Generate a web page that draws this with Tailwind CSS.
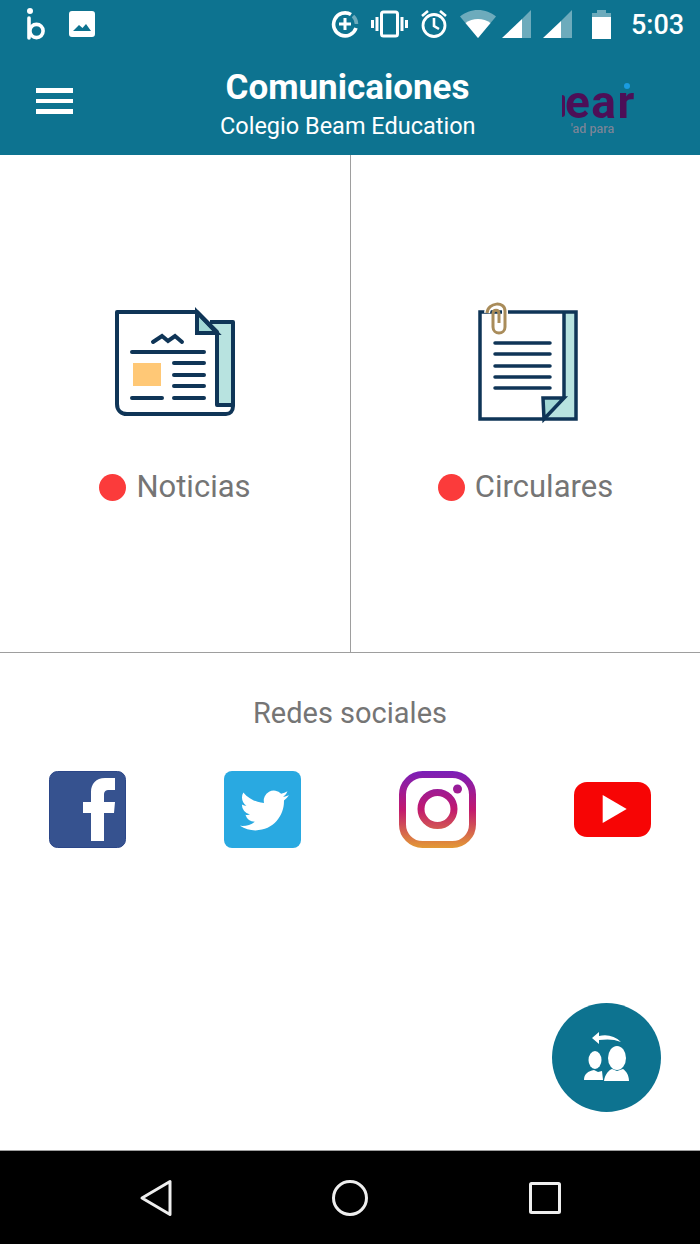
<!DOCTYPE html>
<html lang="es">
<head>
  <meta charset="UTF-8">
  <meta name="viewport" content="width=device-width, initial-scale=1.0">
  <title>Comunicaiones</title>
  <script src="https://cdn.jsdelivr.net/npm/@tailwindcss/browser@4"></script>
</head>
<body class="bg-white font-[Roboto,sans-serif]">
  <div class="relative flex flex-col w-[700px] h-[1244px] overflow-hidden">
    <!-- barra de estado -->
    <div class="flex items-center h-[48px] bg-[#0d7390] text-white">
      <svg class="ml-[27px]" width="20" height="36" viewBox="0 0 20 36" fill="none" stroke="white">
        <circle cx="3" cy="5" r="3" fill="white" stroke="none"/>
        <path d="M2 12V32" stroke-width="3.6" stroke-linecap="round"/>
        <circle cx="9.5" cy="25" r="6.6" stroke-width="3.6"/>
      </svg>
      <svg class="ml-[22px]" width="26" height="26" viewBox="0 0 26 26">
        <path fill="white" d="M3 0H23A3 3 0 0 1 26 3V23A3 3 0 0 1 23 26H3A3 3 0 0 1 0 23V3A3 3 0 0 1 3 0ZM4 20H22L17 13L13.5 17L10 14Z" fill-rule="evenodd"/>
      </svg>
      <svg class="ml-[236px]" width="28" height="28" viewBox="0 0 28 28" fill="none" stroke="white">
        <path d="M20 4.5A11.5 11.5 0 1 0 25 18" stroke-width="3.6"/>
        <path d="M22 6A11.5 11.5 0 0 1 25.5 14" stroke="white" stroke-opacity="0.4" stroke-width="3.6"/>
        <path d="M14 8V20M8 14H20" stroke-width="3"/>
      </svg>
      <svg class="ml-[12px]" width="37" height="28" viewBox="0 0 37 28" fill="none" stroke="white">
        <rect x="10.5" y="2" width="16" height="24" rx="2" stroke-width="3"/>
        <path d="M6 7V21M1.5 10V18M31 7V21M35.5 10V18" stroke-width="3"/>
      </svg>
      <svg class="ml-[12px]" width="28" height="30" viewBox="0 0 28 30" fill="none" stroke="white">
        <circle cx="14" cy="16.5" r="11" stroke-width="2.8"/>
        <path d="M14 9V17L19 20M2 7L8 2M26 7L20 2" stroke-width="2.6"/>
      </svg>
      <svg class="ml-[12px]" width="36" height="28" viewBox="0 0 36 28">
        <path fill="white" fill-opacity="0.4" d="M18 0C11 0 5 2.500 0 6.500L18 28L36 6.500C31 2.500 25 0 18 0Z"/>
        <path fill="white" d="M5.500 13L18 28L30.500 13C27 10.500 22.500 9 18 9C13.500 9 9 10.500 5.500 13Z"/>
      </svg>
      <svg class="ml-[6px]" width="29" height="28" viewBox="0 0 29 28">
        <path fill="white" fill-opacity="0.4" d="M29 0V28H20V9Z"/>
        <path fill="white" d="M20 9V28H0Z"/>
      </svg>
      <svg class="ml-[12px]" width="29" height="28" viewBox="0 0 29 28">
        <path fill="white" fill-opacity="0.4" d="M29 0V28H18V11Z"/>
        <path fill="white" d="M18 11V28H0Z"/>
      </svg>
      <svg class="ml-[20px]" width="19" height="29" viewBox="0 0 19 29">
        <path fill="white" fill-opacity="0.4" d="M5 0H14V3H19V8H0V3H5Z"/>
        <rect y="7" width="19" height="22" fill="white"/>
      </svg>
      <span class="ml-[20px] mt-[3px] text-[27px] leading-none font-medium whitespace-nowrap">5:03</span>
    </div>

    <!-- encabezado -->
    <header class="flex items-start h-[107px] bg-[#0d7390] text-white">
      <div class="flex flex-col gap-[6px] ml-[36px] mt-[40px] w-[37px]">
        <div class="h-[4.500px] bg-white"></div>
        <div class="h-[4.500px] bg-white"></div>
        <div class="h-[4.500px] bg-white"></div>
      </div>
      <div class="ml-[147px] mt-[21px] w-[255px] text-center whitespace-nowrap">
        <h1 class="text-[35px] leading-[38px] font-bold">Comunicaiones</h1>
        <p class="mt-[3px] text-[23.500px] leading-[32px]">Colegio Beam Education</p>
      </div>
      <div class="relative flex flex-col ml-[87px] mt-[35px] w-[73px] h-[52px] blur-[0.4px]">
        <span class="absolute top-[12px] left-0 w-[3px] h-[22px] rounded-r-full bg-[#4d0f57]"></span>
        <span class="absolute top-0 right-[5px] w-[6px] h-[6px] rounded-full bg-[#1a9ce0]"></span>
        <span class="mt-[4px] ml-[3px] text-[46px] leading-[30px] font-bold tracking-[1.500px] text-[#4d0f57]">ear</span>
        <span class="mt-[5px] ml-[9px] text-[12.500px] leading-[13px] font-medium text-[#7b8496] whitespace-nowrap">'ad para</span>
      </div>
    </header>

    <!-- comunicaciones -->
    <section class="flex h-[498px] border-b border-[#9e9e9e]">
      <div class="flex flex-col items-center w-[351px] pt-[150px] border-r border-[#9e9e9e]">
        <svg class="blur-[0.4px]" width="130" height="115" viewBox="0 0 130 115" fill="none" stroke="#0f3557" stroke-width="4">
          <path fill="#b8e3e0" stroke="none" d="M100 17H123V100H107V27Z"/>
          <path fill="#a2d8d5" d="M87 7V28H107Z"/>
          <path stroke-linejoin="round" d="M100 17H123V101C123 106 120 109 116 109H17C11 109 7 105 7 99V7H87L107 27V100H123"/>
          <path stroke-linecap="round" d="M43 37L52 31L58 36L65 31L72 37M22 47H94M64 58H94M64 70H94M64 81H94M64 93H94M22 93H52"/>
          <rect x="23" y="58" width="28" height="23" fill="#ffc876" stroke="none"/>
        </svg>
        <div class="flex items-center gap-[10px] mt-[49px] h-[36px]">
          <span class="w-[27px] h-[27px] rounded-full bg-[#fb3b3b]"></span>
          <span class="text-[31px] leading-[36px] text-[#757575]">Noticias</span>
        </div>
      </div>
      <div class="flex flex-col items-center w-[349px] pt-[150px]">
        <svg class="overflow-visible blur-[0.4px]" width="130" height="115" viewBox="0 0 130 115" fill="none" stroke="#0f3557" stroke-width="3.500">
          <path fill="#b8e3e0" stroke="none" d="M103 7H115V114H83L103 93Z"/>
          <path fill="#a2d8d5" d="M82 93H103L83 114Z"/>
          <path d="M19 7H115V114H19ZM103 7V93"/>
          <path stroke-linecap="round" d="M34 38H89M34 49H89M34 61H89M34 72H89M34 83H89"/>
          <path stroke="#ffffff" stroke-width="6" d="M26 8C27 -3 44 -4 44 6V22C44 30 32 30 32 22V9"/>
          <path stroke="#a98c5a" stroke-width="3" d="M26 8C27 -3 44 -4 44 6V22C44 30 32 30 32 22V9C32 4 38 4 38 9V18"/>
        </svg>
        <div class="flex items-center gap-[10px] mt-[49px] h-[36px]">
          <span class="w-[27px] h-[27px] rounded-full bg-[#fb3b3b]"></span>
          <span class="text-[31px] leading-[36px] text-[#757575]">Circulares</span>
        </div>
      </div>
    </section>

    <!-- redes sociales -->
    <section class="flex-1 bg-white">
      <h2 class="mt-[44px] text-center text-[29px] leading-[32px] font-normal text-[#757575]">Redes sociales</h2>
      <div class="grid grid-cols-4 mt-[42px] justify-items-center">
        <svg class="blur-[0.4px]" width="77" height="77" viewBox="0 0 77 77">
          <rect x="0.500" y="0.500" width="76" height="76" rx="8" fill="#36528f" stroke="#2b4688"/>
          <path fill="white" d="M66 7H56C47 7 42 13 42 21V31H34V42H42V70H55V42H65L66 31H55V24C55 20 57 19 60 19H66Z"/>
        </svg>
        <svg class="blur-[0.4px]" width="77" height="77" viewBox="0 0 77 77">
          <rect width="77" height="77" rx="8" fill="#29a9e1"/>
          <g transform="translate(16 15) scale(2.040)">
            <path fill="white" d="M23.953 4.570a10 10 0 01-2.825.775 4.958 4.958 0 002.163-2.723c-.951.555-2.005.959-3.127 1.184a4.920 4.920 0 00-8.384 4.482C7.690 8.095 4.067 6.130 1.640 3.162a4.822 4.822 0 00-.666 2.475c0 1.710.870 3.213 2.188 4.096a4.904 4.904 0 01-2.228-.616v.060a4.923 4.923 0 003.946 4.827 4.996 4.996 0 01-2.212.085 4.936 4.936 0 004.604 3.417 9.867 9.867 0 01-6.102 2.105c-.390 0-.779-.023-1.170-.067a13.995 13.995 0 007.557 2.209c9.053 0 13.998-7.496 13.998-13.985 0-.210 0-.420-.015-.630A9.935 9.935 0 0024 4.590z"/>
          </g>
        </svg>
        <svg class="blur-[0.4px]" width="77" height="77" viewBox="0 0 77 77" fill="none">
          <defs>
            <linearGradient id="ig" x1="0" y1="0" x2="0" y2="77" gradientUnits="userSpaceOnUse">
              <stop offset="0" stop-color="#7a1fb8"/>
              <stop offset="0.5" stop-color="#c2186f"/>
              <stop offset="1" stop-color="#e39a35"/>
            </linearGradient>
          </defs>
          <rect x="3.500" y="3.500" width="70" height="70" rx="20" stroke="url(#ig)" stroke-width="7"/>
          <circle cx="38.500" cy="38" r="16.500" stroke="url(#ig)" stroke-width="7"/>
          <circle cx="58.500" cy="18" r="4.500" fill="url(#ig)"/>
        </svg>
        <svg class="blur-[0.4px]" width="77" height="77" viewBox="0 0 77 77">
          <rect y="11" width="77" height="55" rx="13" fill="#f70505"/>
          <path fill="white" d="M28.700 24L52.700 38L28.700 52Z"/>
        </svg>
      </div>
    </section>

    <!-- boton flotante -->
    <button class="absolute top-[1003px] left-[552px] w-[109px] h-[109px] rounded-full bg-[#0d7390]">
      <svg class="blur-[0.5px]" width="109" height="109" viewBox="0 0 109 109" fill="white">
        <ellipse cx="43" cy="57" rx="6.500" ry="9"/>
        <ellipse cx="65" cy="55" rx="9" ry="12"/>
        <path d="M32 77C32 71 36 68 42 67L46 69L50 68L51 77Z"/>
        <path d="M52 78C53 71 57 67 60 66L65 68L71 66C74 68 77 72 77 78Z"/>
        <path d="M40 35L47 29V33C55 31 63 33 69 39C62 36 55 36 47 37V41Z"/>
      </svg>
    </button>

    <!-- barra de navegacion -->
    <nav class="flex items-center justify-between h-[94px] px-[135px] bg-black border-t border-[#9e9e9e]">
      <svg width="40" height="40" viewBox="0 0 40 40" fill="none" stroke="#eeeeee" stroke-width="3" stroke-linejoin="round">
        <path d="M7 20L35 3.500V36.500Z"/>
      </svg>
      <svg width="40" height="40" viewBox="0 0 40 40" fill="none" stroke="#eeeeee" stroke-width="3">
        <circle cx="20" cy="20" r="16.500"/>
      </svg>
      <svg width="40" height="40" viewBox="0 0 40 40" fill="none" stroke="#eeeeee" stroke-width="3" stroke-linejoin="round">
        <rect x="5.500" y="5.500" width="29" height="29" rx="1"/>
      </svg>
    </nav>
  </div>
</body>
</html>
